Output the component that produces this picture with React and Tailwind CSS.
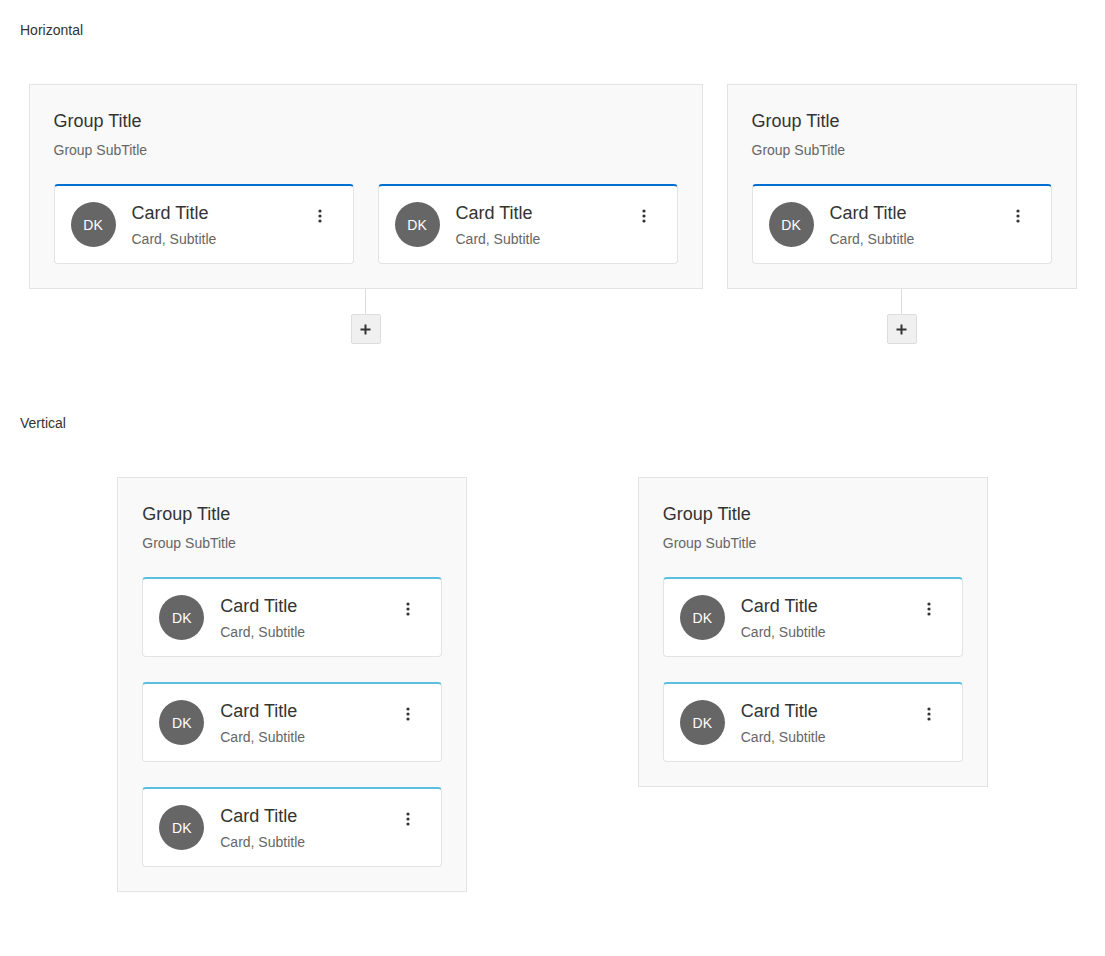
import React from "react";

const KebabIcon = () => (
  <svg width="4" height="14" viewBox="0 0 4 14" className="block">
    <circle cx="2" cy="2" r="1.6" fill="#333" />
    <circle cx="2" cy="7" r="1.6" fill="#333" />
    <circle cx="2" cy="12" r="1.6" fill="#333" />
  </svg>
);

const PlusIcon = () => (
  <svg width="11" height="11" viewBox="0 0 11 11" className="block">
    <path d="M5.5 0.5v10M0.5 5.5h10" stroke="#333" strokeWidth="2" />
  </svg>
);

// single card with avatar, title/subtitle and a menu button
const Card = ({ accent }) => (
  <div
    className={`w-[300px] h-[80px] bg-white border border-[#e3e3e3] border-t-2 rounded-[4px] flex items-start p-4 pt-4 ${accent}`}
  >
    <div className="w-[45px] h-[45px] rounded-full bg-[#666] text-white text-sm flex items-center justify-center shrink-0">
      DK
    </div>
    <div className="ml-4 flex-1 min-w-0">
      <div className="text-[18px] leading-[22px] text-[#333]">Card Title</div>
      <div className="mt-[6px] text-sm leading-[18px] text-[#666]">
        Card, Subtitle
      </div>
    </div>
    <button className="w-[20px] h-[20px] mt-[4px] mr-[7px] flex items-center justify-center">
      <KebabIcon />
    </button>
  </div>
);

const Group = ({ count, vertical, accent }) => (
  <div className="bg-[#f9f9f9] border border-[#e3e3e3] p-6">
    <div className="text-[18px] leading-6 text-[#333]">Group Title</div>
    <div className="mt-2 text-sm leading-[18px] text-[#666]">Group SubTitle</div>
    <div
      className={`mt-[25px] flex ${vertical ? "flex-col gap-[25px]" : "flex-row gap-6"}`}
    >
      {Array.from({ length: count }).map((_, i) => (
        <Card key={i} accent={accent} />
      ))}
    </div>
  </div>
);

const HorizontalColumn = ({ count }) => (
  <div className="flex flex-col items-center">
    <Group count={count} accent="border-t-[#0070d2]" />
    <div className="w-px h-[25px] bg-[#dcdcdc]" />
    <button className="w-[30px] h-[30px] bg-[#f0f0f0] border border-[#dcdcdc] rounded-[2px] flex items-center justify-center">
      <PlusIcon />
    </button>
  </div>
);

export default function App() {
  return (
    <div
      className="min-h-screen bg-white text-[#333]"
      style={{ fontFamily: "'Liberation Sans', Arial, sans-serif" }}
    >
      <section className="px-5 pt-5">
        <div className="text-sm leading-5">Horizontal</div>
        <div className="mt-[44px] flex justify-center items-start gap-6">
          <HorizontalColumn count={2} />
          <HorizontalColumn count={1} />
        </div>
      </section>

      <section className="px-5 pt-[69px] pb-16">
        <div className="text-sm leading-5">Vertical</div>
        <div className="mt-[44px] px-3 flex justify-around items-start">
          <Group count={3} vertical accent="border-t-[#5bc0de]" />
          <Group count={2} vertical accent="border-t-[#5bc0de]" />
        </div>
      </section>
    </div>
  );
}
